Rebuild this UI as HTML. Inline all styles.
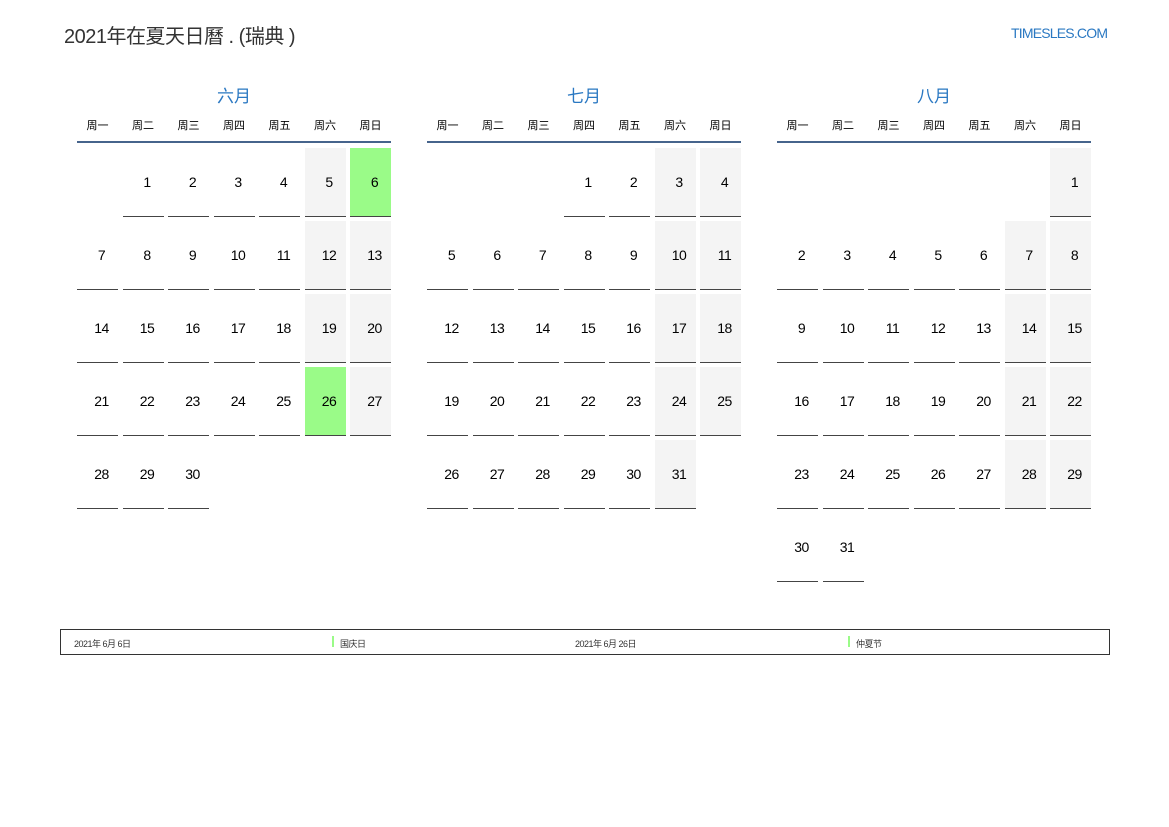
<!DOCTYPE html>
<html><head><meta charset="utf-8">
<style>
*{margin:0;padding:0;box-sizing:border-box}
body{width:1169px;height:827px;background:#fff;font-family:"Liberation Sans","Noto Sans CJK SC",sans-serif;position:relative;overflow:hidden;color:#000}
.title{position:absolute;left:64px;top:20px;font-size:20px;color:#333;letter-spacing:-0.5px}
.logo{position:absolute;left:1011px;top:25px;font-size:14px;color:#2a78c2;letter-spacing:-0.8px}
.m{position:absolute;top:85px;width:314px}
.mt{text-align:center;font-size:17px;color:#2a78c2;height:26px;line-height:24px}
.wd{display:grid;grid-template-columns:repeat(7,41px);column-gap:4.5px;height:32px;border-bottom:2px solid #46648c}
.wd div{text-align:center;font-size:11px;line-height:30px}
.g{display:grid;grid-template-columns:repeat(7,41px);column-gap:4.5px;row-gap:4.5px;margin-top:5px}
.g div{height:68.5px;font-size:14px;line-height:68px;text-align:center;padding-left:8px;letter-spacing:-0.5px}
.g .d{border-bottom:1px solid #444}
.g .w{background:#f4f4f4}
.g .h{background:#9afb88}
.leg{position:absolute;left:60px;top:629px;width:1050px;height:26px;border:1px solid #333;font-size:9px;color:#333}
.leg span{position:absolute;top:7px;letter-spacing:-0.5px}
.bar{position:absolute;top:6px;width:2px;height:11px;background:#9afb88}
</style></head><body>
<div class="title">2021年在夏天日曆 . (瑞典 )</div>
<div class="logo">TIMESLES.COM</div>

<div class="m" style="left:77px">
<div class="mt">六月</div>
<div class="wd"><div>周一</div><div>周二</div><div>周三</div><div>周四</div><div>周五</div><div>周六</div><div>周日</div></div>
<div class="g">
<div></div><div class="d">1</div><div class="d">2</div><div class="d">3</div><div class="d">4</div><div class="d w">5</div><div class="d h">6</div>
<div class="d">7</div><div class="d">8</div><div class="d">9</div><div class="d">10</div><div class="d">11</div><div class="d w">12</div><div class="d w">13</div>
<div class="d">14</div><div class="d">15</div><div class="d">16</div><div class="d">17</div><div class="d">18</div><div class="d w">19</div><div class="d w">20</div>
<div class="d">21</div><div class="d">22</div><div class="d">23</div><div class="d">24</div><div class="d">25</div><div class="d h">26</div><div class="d w">27</div>
<div class="d">28</div><div class="d">29</div><div class="d">30</div>
</div></div>

<div class="m" style="left:427px">
<div class="mt">七月</div>
<div class="wd"><div>周一</div><div>周二</div><div>周三</div><div>周四</div><div>周五</div><div>周六</div><div>周日</div></div>
<div class="g">
<div></div><div></div><div></div><div class="d">1</div><div class="d">2</div><div class="d w">3</div><div class="d w">4</div>
<div class="d">5</div><div class="d">6</div><div class="d">7</div><div class="d">8</div><div class="d">9</div><div class="d w">10</div><div class="d w">11</div>
<div class="d">12</div><div class="d">13</div><div class="d">14</div><div class="d">15</div><div class="d">16</div><div class="d w">17</div><div class="d w">18</div>
<div class="d">19</div><div class="d">20</div><div class="d">21</div><div class="d">22</div><div class="d">23</div><div class="d w">24</div><div class="d w">25</div>
<div class="d">26</div><div class="d">27</div><div class="d">28</div><div class="d">29</div><div class="d">30</div><div class="d w">31</div>
</div></div>

<div class="m" style="left:777px">
<div class="mt">八月</div>
<div class="wd"><div>周一</div><div>周二</div><div>周三</div><div>周四</div><div>周五</div><div>周六</div><div>周日</div></div>
<div class="g">
<div></div><div></div><div></div><div></div><div></div><div></div><div class="d w">1</div>
<div class="d">2</div><div class="d">3</div><div class="d">4</div><div class="d">5</div><div class="d">6</div><div class="d w">7</div><div class="d w">8</div>
<div class="d">9</div><div class="d">10</div><div class="d">11</div><div class="d">12</div><div class="d">13</div><div class="d w">14</div><div class="d w">15</div>
<div class="d">16</div><div class="d">17</div><div class="d">18</div><div class="d">19</div><div class="d">20</div><div class="d w">21</div><div class="d w">22</div>
<div class="d">23</div><div class="d">24</div><div class="d">25</div><div class="d">26</div><div class="d">27</div><div class="d w">28</div><div class="d w">29</div>
<div class="d">30</div><div class="d">31</div>
</div></div>

<div class="leg">
<span style="left:13px">2021年 6月 6日</span>
<div class="bar" style="left:271px"></div><span style="left:279px">国庆日</span>
<span style="left:514px">2021年 6月 26日</span>
<div class="bar" style="left:787px"></div><span style="left:795px">仲夏节</span>
</div>
</body></html>
